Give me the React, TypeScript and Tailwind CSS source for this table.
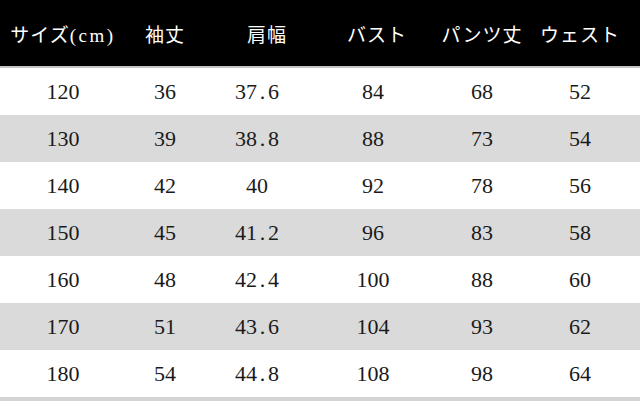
const headers = ["サイズ", "袖丈", "肩幅", "バスト", "パンツ丈", "ウェスト"];

const rows = [
  ["120", "36", "37.6", "84", "68", "52"],
  ["130", "39", "38.8", "88", "73", "54"],
  ["140", "42", "40", "92", "78", "56"],
  ["150", "45", "41.2", "96", "83", "58"],
  ["160", "48", "42.4", "100", "88", "60"],
  ["170", "51", "43.6", "104", "93", "62"],
  ["180", "54", "44.8", "108", "98", "64"],
];

const cols = "grid grid-cols-[126px_78px_106px_126px_92px_104px]";

// digits with a full half-width cell for the dot, like the mincho original
function Num({ value }: { value: string }) {
  const [a, b] = value.split(".");
  return (
    <span>
      {a}
      {b !== undefined && (
        <>
          <span className="inline-block w-[11px] text-center">.</span>
          {b}
        </>
      )}
    </span>
  );
}

export default function App() {
  return (
    <div className="w-[640px] h-[402px] overflow-hidden bg-white">
      <div className={`${cols} h-[66px] bg-black items-center pt-[6px]`}>
        {headers.map((h, i) => (
          <div
            key={h}
            className={`text-center text-white text-[19px] tracking-[1px] ${i === 2 ? "pl-5" : ""} ${i === 3 ? "pl-2" : ""}`}
            style={{ fontFamily: '"Liberation Serif", "Noto Sans CJK JP", serif' }}
          >
            {h}
            {i === 0 && <span className="tracking-[2.5px]">(cm)</span>}
          </div>
        ))}
      </div>
      <div className="h-[2px] bg-[#c4c4c4]" />
      {rows.map((r, ri) => (
        <div
          key={r[0]}
          className={`${cols} h-[47px] items-center ${ri % 2 === 1 ? "bg-[#dadada]" : "bg-white"}`}
        >
          {r.map((v, ci) => (
            <div
              key={ci}
              className="text-center text-[22px] text-[#1a1a1a] font-['Liberation_Serif',serif]"
            >
              <Num value={v} />
            </div>
          ))}
        </div>
      ))}
      <div className="h-[4px] bg-[#d4d4d4]" />
    </div>
  );
}
